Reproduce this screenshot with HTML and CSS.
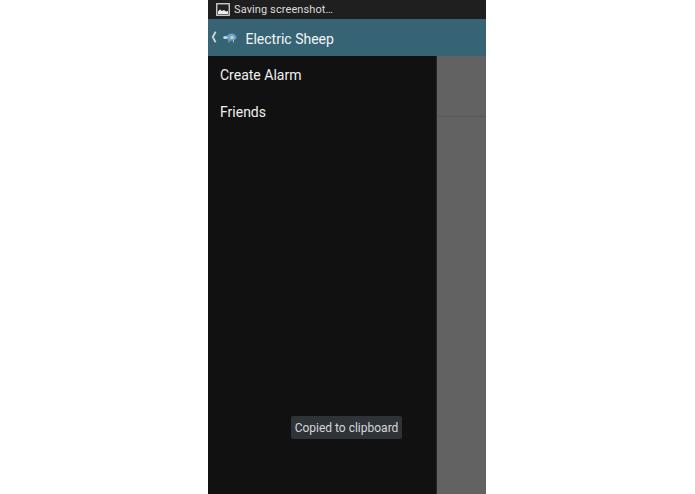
FILE: index.html
```
<!DOCTYPE html>
<html lang="en">
<head>
<meta charset="utf-8">
<title>Electric Sheep</title>
<link rel="stylesheet" href="styles.css">
</head>
<body>
<main class="phone">
  <header class="status">
    <svg class="status-icon" viewBox="0 0 14 13" width="14" height="13">
      <rect x="0.75" y="0.75" width="12.5" height="11.5" fill="#222" stroke="#d8d8d8" stroke-width="1.3"/>
      <path d="M2 11V8.5L4 6.5L6 8L8 7L10 8.5L12 8V11Z" fill="#eee"/>
    </svg>
    <span class="status-text">Saving screenshot…</span>
  </header>
  <nav class="actionbar">
    <svg class="back" viewBox="0 0 6 12" width="6" height="12">
      <path d="M4.6 0.8L1.8 6L4.6 11.2" fill="none" stroke="#c9d6da" stroke-width="1.8"/>
    </svg>
    <svg class="logo" viewBox="0 0 14 10" width="14" height="10">
      <ellipse cx="8.5" cy="4.2" rx="4.8" ry="3.6" fill="#6f9fd0"/>
      <circle cx="9" cy="4.4" r="1.7" fill="#c7dc8a"/>
      <ellipse cx="2.4" cy="4.6" rx="2.2" ry="1.5" fill="#c4dbe8"/>
      <path d="M6 7V9.5M10.5 7V9.5" stroke="#9fb6c4" stroke-width="1"/>
    </svg>
    <h1 class="title">Electric Sheep</h1>
  </nav>
  <div class="content">
    <aside class="drawer">
      <ul class="menu">
        <li class="menu-item">Create Alarm</li>
        <li class="menu-item">Friends</li>
      </ul>
    </aside>
    <div class="dimmed">
      <div class="dimmed-row"></div>
    </div>
  </div>
  <div class="toast">Copied to clipboard</div>
</main>
</body>
</html>
```
FILE: styles.css
```
* { box-sizing: border-box; }
html, body { margin: 0; padding: 0; background: #fff; }
body { height: 494px; overflow: hidden; font-family: Roboto, "Liberation Sans", sans-serif; }
.phone {
  position: relative;
  width: 278px;
  height: 494px;
  margin-left: 208px;
  display: flex;
  flex-direction: column;
  background: #111;
}
.status {
  height: 19px;
  background: #1f1f1f;
  display: flex;
  align-items: center;
  padding-left: 8px;
  gap: 4px;
}
.status-icon { flex: none; }
.status-text { color: #dcdcdc; font-size: 11px; letter-spacing: 0.1px; }
.actionbar {
  height: 37px;
  background: #366475;
  display: flex;
  align-items: center;
  padding: 2px 0 0 3px;
}
.back { flex: none; margin-top: -3px; }
.logo { flex: none; margin: -2px 0 0 6px; }
.title {
  margin: 0 0 0 8.5px;
  color: #f2f5f6;
  font-size: 14px;
  font-weight: 400;
}
.content { flex: 1; display: flex; min-height: 0; }
.drawer { width: 229px; background: #111; border-right: 1px solid #2a2a2a; }
.menu { list-style: none; margin: 0; padding: 0; }
.menu-item {
  height: 36.5px;
  display: flex;
  align-items: center;
  padding: 2px 0 0 12px;
  color: #f0f0f0;
  font-size: 14px;
}
.dimmed { flex: 1; background: #626262; }
.dimmed-row { height: 61px; border-bottom: 1px solid #575757; }
.toast {
  position: absolute;
  left: 83px;
  top: 416px;
  width: 111px;
  height: 23px;
  display: flex;
  align-items: center;
  justify-content: center;
  background: #2e3338;
  border-radius: 2px;
  color: #d6d8da;
  font-size: 12px;
  white-space: nowrap;
}
```
